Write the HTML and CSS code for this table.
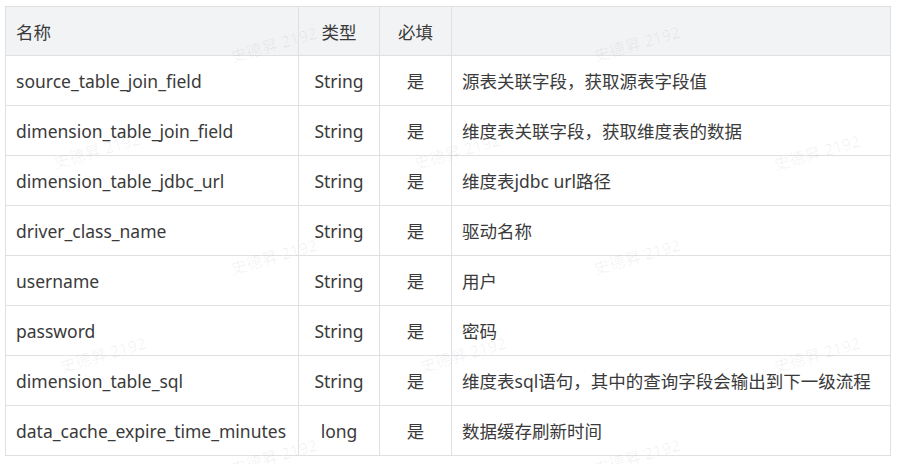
FILE: index.html
```html
<!DOCTYPE html>
<html lang="zh-CN">
<head>
<meta charset="utf-8">
<title>参数表</title>
<link rel="stylesheet" href="styles.css">
</head>
<body>
<div class="page">
  <table class="params">
    <colgroup>
      <col class="c-name">
      <col class="c-type">
      <col class="c-req">
      <col class="c-desc">
    </colgroup>
    <thead>
      <tr><th class="left">名称</th><th>类型</th><th>必填</th><th></th></tr>
    </thead>
    <tbody>
      <tr><td>source_table_join_field</td><td class="mid">String</td><td class="mid">是</td><td>源表关联字段，获取源表字段值</td></tr>
      <tr><td>dimension_table_join_field</td><td class="mid">String</td><td class="mid">是</td><td>维度表关联字段，获取维度表的数据</td></tr>
      <tr><td>dimension_table_jdbc_url</td><td class="mid">String</td><td class="mid">是</td><td>维度表jdbc url路径</td></tr>
      <tr><td>driver_class_name</td><td class="mid">String</td><td class="mid">是</td><td>驱动名称</td></tr>
      <tr><td>username</td><td class="mid">String</td><td class="mid">是</td><td>用户</td></tr>
      <tr><td>password</td><td class="mid">String</td><td class="mid">是</td><td>密码</td></tr>
      <tr><td>dimension_table_sql</td><td class="mid">String</td><td class="mid">是</td><td>维度表sql语句，其中的查询字段会输出到下一级流程</td></tr>
      <tr><td>data_cache_expire_time_minutes</td><td class="mid">long</td><td class="mid">是</td><td>数据缓存刷新时间</td></tr>
    </tbody>
  </table>
  <div class="wm-layer" aria-hidden="true">
    <span class="wm" style="left:231px;top:44px">史德昇 2192</span>
    <span class="wm" style="left:594px;top:43px">史德昇 2192</span>
    <span class="wm" style="left:54px;top:150px">史德昇 2192</span>
    <span class="wm" style="left:414px;top:151px">史德昇 2192</span>
    <span class="wm" style="left:774px;top:152px">史德昇 2192</span>
    <span class="wm" style="left:231px;top:256px">史德昇 2192</span>
    <span class="wm" style="left:594px;top:256px">史德昇 2192</span>
    <span class="wm" style="left:60px;top:354px">史德昇 2192</span>
    <span class="wm" style="left:420px;top:354px">史德昇 2192</span>
    <span class="wm" style="left:774px;top:354px">史德昇 2192</span>
    <span class="wm" style="left:231px;top:456px">史德昇 2192</span>
    <span class="wm" style="left:594px;top:456px">史德昇 2192</span>
  </div>
</div>
</body>
</html>
```

FILE: styles.css
```css
html, body {
  margin: 0;
  padding: 0;
  background: #ffffff;
}

body {
  font-family: "Noto Sans", "Noto Sans CJK SC", sans-serif;
  font-size: 17.5px;
  color: #3a3a3a;
}

.page {
  position: relative;
  width: 899px;
  height: 464px;
  overflow: hidden;
  padding: 6px 0 0 5px;
  box-sizing: border-box;
}

.params {
  border-collapse: collapse;
  table-layout: fixed;
  width: 885px;
}

.c-name { width: 293px; }
.c-type { width: 81px; }
.c-req { width: 72px; }
.c-desc { width: 439px; }

.params th,
.params td {
  border: 1px solid #dee0e3;
  height: 50px;
  padding: 0 10px;
  box-sizing: border-box;
  vertical-align: middle;
  white-space: nowrap;
  font-weight: normal;
  text-align: left;
}

.params thead th {
  height: 49px;
  background: #f2f3f5;
  text-align: center;
}

.params thead th.left {
  text-align: left;
}

.params td.mid {
  text-align: center;
}

.wm-layer {
  position: absolute;
  inset: 0;
  pointer-events: none;
}

.wm {
  position: absolute;
  font-size: 16px;
  color: rgba(0, 0, 0, 0.06);
  transform: rotate(-16deg);
  transform-origin: left center;
  white-space: nowrap;
}
```
